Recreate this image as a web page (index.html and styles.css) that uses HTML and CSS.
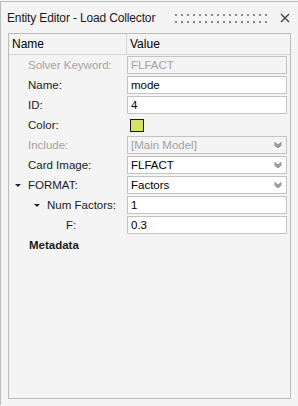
FILE: index.html
```html
<!DOCTYPE html>
<html>
<head>
<meta charset="utf-8">
<link rel="stylesheet" href="styles.css">
</head>
<body>
<div class="window">
  <div class="titlebar">
    <span class="title">Entity Editor - Load Collector</span>
    <svg class="grip" width="94" height="9" viewBox="0 0 94 9">
      <defs><pattern id="dots" width="6" height="7" patternUnits="userSpaceOnUse"><rect x="0" y="0" width="2" height="2" fill="#8a8a8a"/></pattern></defs>
      <rect x="0" y="0" width="94" height="9" fill="url(#dots)"/>
    </svg>
    <svg class="close" width="10" height="10" viewBox="0 0 10 10"><path d="M1 1 L9 9 M9 1 L1 9" stroke="#444" stroke-width="1.4" fill="none"/></svg>
  </div>
  <div class="panel">
    <div class="header">
      <div class="hcell hname">Name</div>
      <div class="hcell hvalue">Value</div>
    </div>
    <div class="rows">
      <div class="row">
        <div class="label lvl0 disabled">Solver Keyword:</div>
        <div class="field disabled-field">FLFACT</div>
      </div>
      <div class="row">
        <div class="label lvl0">Name:</div>
        <div class="field">mode</div>
      </div>
      <div class="row">
        <div class="label lvl0">ID:</div>
        <div class="field">4</div>
      </div>
      <div class="row">
        <div class="label lvl0">Color:</div>
        <div class="swatch-cell"><span class="swatch"></span></div>
      </div>
      <div class="row">
        <div class="label lvl0 disabled">Include:</div>
        <div class="field select disabled-field">[Main Model]<svg class="chev" width="8" height="6" viewBox="0 0 8 6"><path d="M0.5 0.5 L4 3.5 L7.5 0.5 M0.5 2.5 L4 5.5 L7.5 2.5" stroke="#8a8a8a" stroke-width="1.3" fill="none"/></svg></div>
      </div>
      <div class="row">
        <div class="label lvl0">Card Image:</div>
        <div class="field select">FLFACT<svg class="chev" width="8" height="6" viewBox="0 0 8 6"><path d="M0.5 0.5 L4 3.5 L7.5 0.5 M0.5 2.5 L4 5.5 L7.5 2.5" stroke="#8a8a8a" stroke-width="1.3" fill="none"/></svg></div>
      </div>
      <div class="row">
        <div class="label lvl0"><span class="tri"></span>FORMAT:</div>
        <div class="field select">Factors<svg class="chev" width="8" height="6" viewBox="0 0 8 6"><path d="M0.5 0.5 L4 3.5 L7.5 0.5 M0.5 2.5 L4 5.5 L7.5 2.5" stroke="#8a8a8a" stroke-width="1.3" fill="none"/></svg></div>
      </div>
      <div class="row">
        <div class="label lvl1"><span class="tri"></span>Num Factors:</div>
        <div class="field">1</div>
      </div>
      <div class="row">
        <div class="label lvl2">F:</div>
        <div class="field">0.3</div>
      </div>
      <div class="row">
        <div class="label lvl0 bold">Metadata</div>
      </div>
    </div>
  </div>
</div>
</body>
</html>
```
FILE: styles.css
```css
html, body {
  margin: 0;
  padding: 0;
  background: #f4f4f4;
}
body {
  font-family: "Liberation Sans", Arial, sans-serif;
  font-size: 11.5px;
  color: #000;
  width: 298px;
  height: 406px;
  overflow: hidden;
}
.window {
  margin-top: 1px;
  border-top: 1px solid #bcbcbc;
  border-left: 1px solid #bcbcbc;
  height: 404px;
  box-sizing: border-box;
}
.titlebar {
  height: 31px;
  display: flex;
  align-items: center;
  padding-left: 6px;
  padding-top: 1px;
  box-sizing: border-box;
}
.title {
  color: #1a1a1a;
  white-space: nowrap;
  font-size: 12px;
  letter-spacing: -0.15px;
}
.grip {
  margin-left: auto;
  margin-top: 1px;
}
.close {
  margin-left: 11px;
  margin-right: 8px;
}
.panel {
  margin-left: 7px;
  width: 283px;
  height: 366px;
  border: 1px solid #bcbcbc;
  box-sizing: border-box;
}
.header {
  display: flex;
  height: 20px;
  border-bottom: 1px solid #d4d4d4;
  font-size: 12px;
}
.hcell {
  line-height: 20px;
  padding-left: 3px;
}
.hname {
  width: 114px;
  border-right: 1px solid #d4d4d4;
}
.rows {
  display: flex;
  flex-direction: column;
}
.row {
  display: flex;
  height: 20px;
  align-items: center;
}
.label {
  width: 118px;
  box-sizing: border-box;
  display: flex;
  align-items: center;
  white-space: nowrap;
  color: #1a1a1a;
}
.lvl0 { padding-left: 19px; }
.lvl1 { padding-left: 38px; }
.lvl2 { padding-left: 57px; }
.disabled { color: #a3a3a3; }
.bold { font-weight: bold; padding-left: 20px; }
.tri {
  width: 0;
  height: 0;
  border-left: 3px solid transparent;
  border-right: 3px solid transparent;
  border-top: 3px solid #222;
  margin-left: -13px;
  margin-right: 7px;
}
.field {
  width: 160px;
  height: 18px;
  box-sizing: border-box;
  border: 1px solid #c3c3c3;
  background: #fff;
  padding-left: 3px;
  line-height: 16px;
  display: flex;
  align-items: center;
  color: #000;
}
.disabled-field {
  background: #f4f4f4;
  color: #a3a3a3;
}
.select .chev {
  margin-left: auto;
  margin-right: 4px;
}
.swatch-cell {
  width: 160px;
  height: 18px;
  display: flex;
  align-items: center;
}
.swatch {
  margin-left: 3px;
  width: 14px;
  height: 13px;
  box-sizing: border-box;
  border: 1px solid #1a1a1a;
  background: #d4e267;
}
```
